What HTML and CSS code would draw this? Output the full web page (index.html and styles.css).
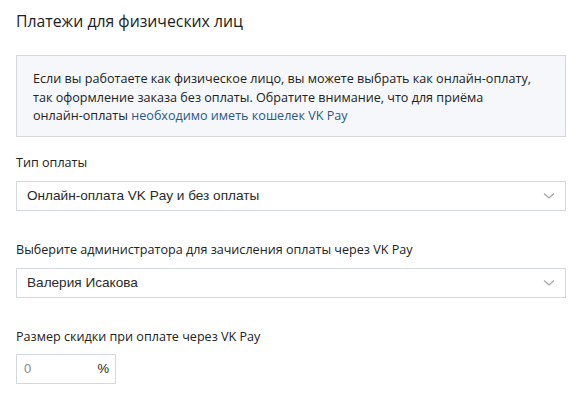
FILE: index.html
```html
<!DOCTYPE html>
<html lang="ru">
<head>
<meta charset="utf-8">
<link rel="stylesheet" href="styles.css">
</head>
<body>
<div class="page">
  <h1 class="title">Платежи для физических лиц</h1>
  <div class="info">
    Если вы работаете как физическое лицо, вы можете выбрать как <span class="nowrap">онлайн-оплату,</span> так оформление заказа без оплаты. Обратите внимание, что для приёма <span class="nowrap">онлайн-оплаты</span> <a class="link" href="#">необходимо иметь кошелек VK Pay</a>
  </div>
  <div class="field first">
    <div class="label">Тип оплаты</div>
    <div class="select">
      <span class="value">Онлайн-оплата VK Pay и без оплаты</span>
      <svg class="chev" width="12" height="8" viewBox="0 0 12 8"><path d="M1 1.5 L6 6 L11 1.5" fill="none" stroke="#a0a4a9" stroke-width="1.2"/></svg>
    </div>
  </div>
  <div class="field">
    <div class="label">Выберите администратора для зачисления оплаты через VK Pay</div>
    <div class="select">
      <span class="value">Валерия Исакова</span>
      <svg class="chev" width="12" height="8" viewBox="0 0 12 8"><path d="M1 1.5 L6 6 L11 1.5" fill="none" stroke="#a0a4a9" stroke-width="1.2"/></svg>
    </div>
  </div>
  <div class="field">
    <div class="label">Размер скидки при оплате через VK Pay</div>
    <div class="small-input">
      <span class="value">0</span>
      <span class="unit">%</span>
    </div>
  </div>
</div>
</body>
</html>
```

FILE: styles.css
```css
html, body {
  margin: 0;
  padding: 0;
  background: #ffffff;
}
.page {
  width: 550px;
  padding: 10px 16px 0 16px;
  font-family: "Open Sans", sans-serif;
  color: #222222;
}
.title {
  margin: 0;
  font-weight: 400;
  font-size: 15.8px;
  line-height: 22px;
  color: #222222;
}
.info {
  margin-top: 23px;
  background: #f5f7fa;
  border: 1px solid #d7d8db;
  padding: 14px 20px 10px 16px;
  font-size: 12.6px;
  line-height: 18.5px;
  color: #222222;
}
.nowrap {
  white-space: nowrap;
}
.link {
  color: #2a5885;
  text-decoration: none;
}
.field {
  margin-top: 30px;
}
.field.first {
  margin-top: 17px;
}
.label {
  font-size: 12.6px;
  line-height: 18px;
  color: #222222;
  margin-bottom: 9px;
}
.select {
  height: 28px;
  border: 1px solid #d3d9de;
  display: flex;
  align-items: center;
  justify-content: space-between;
  padding: 0 10px 0 10px;
  font-family: "Liberation Sans", Arial, sans-serif;
  font-size: 13.6px;
  color: #2a2a2a;
}
.chev {
  display: block;
}
.small-input {
  width: 85px;
  height: 28px;
  margin-top: -1px;
  border: 1px solid #d3d9de;
  display: flex;
  align-items: center;
  justify-content: space-between;
  padding: 0 6px 0 7px;
  font-family: "Liberation Sans", Arial, sans-serif;
  font-size: 13px;
}
.small-input .value {
  color: #8a8a8a;
}
.small-input .unit {
  color: #222222;
}
```
